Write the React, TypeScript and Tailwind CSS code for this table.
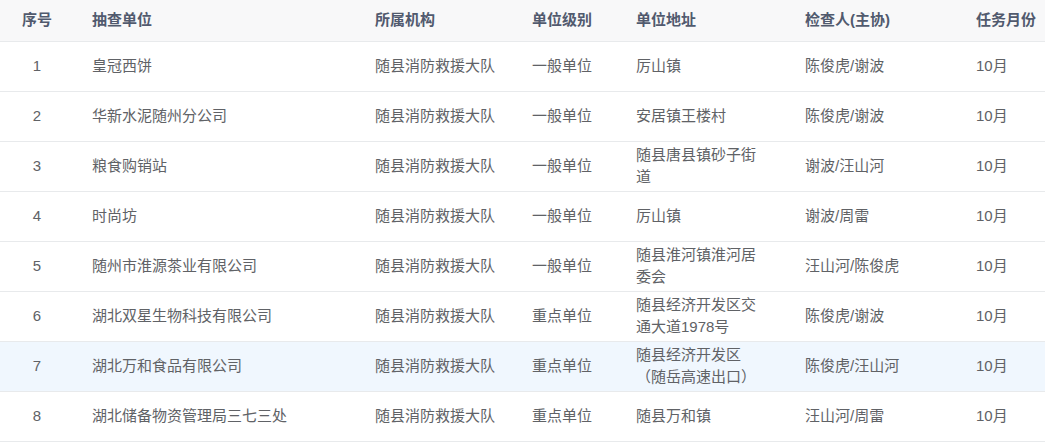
import React from 'react';

interface Row {
  no: number;
  unit: string;
  org: string;
  level: string;
  addr: string;
  checker: string;
  month: string;
}

const rows: Row[] = [
  { no: 1, unit: '皇冠西饼', org: '随县消防救援大队', level: '一般单位', addr: '厉山镇', checker: '陈俊虎/谢波', month: '10月' },
  { no: 2, unit: '华新水泥随州分公司', org: '随县消防救援大队', level: '一般单位', addr: '安居镇王楼村', checker: '陈俊虎/谢波', month: '10月' },
  { no: 3, unit: '粮食购销站', org: '随县消防救援大队', level: '一般单位', addr: '随县唐县镇砂子街道', checker: '谢波/汪山河', month: '10月' },
  { no: 4, unit: '时尚坊', org: '随县消防救援大队', level: '一般单位', addr: '厉山镇', checker: '谢波/周雷', month: '10月' },
  { no: 5, unit: '随州市淮源茶业有限公司', org: '随县消防救援大队', level: '一般单位', addr: '随县淮河镇淮河居委会', checker: '汪山河/陈俊虎', month: '10月' },
  { no: 6, unit: '湖北双星生物科技有限公司', org: '随县消防救援大队', level: '重点单位', addr: '随县经济开发区交通大道1978号', checker: '陈俊虎/谢波', month: '10月' },
  { no: 7, unit: '湖北万和食品有限公司', org: '随县消防救援大队', level: '重点单位', addr: '随县经济开发区（随岳高速出口）', checker: '陈俊虎/汪山河', month: '10月' },
  { no: 8, unit: '湖北储备物资管理局三七三处', org: '随县消防救援大队', level: '重点单位', addr: '随县万和镇', checker: '汪山河/周雷', month: '10月' },
];

const headers = ['抽查单位', '所属机构', '单位级别', '单位地址', '检查人(主协)', '任务月份'];

export default function App() {
  return (
    <div
      className="w-[1045px] h-[444px] bg-white overflow-hidden"
      style={{ fontFamily: '"Liberation Sans", "Noto Sans CJK SC", sans-serif' }}
    >
      <table className="w-full table-fixed border-collapse text-[15px] leading-[22px]">
        <colgroup>
          <col className="w-[74px]" />
          <col className="w-[283px]" />
          <col className="w-[157px]" />
          <col className="w-[104px]" />
          <col className="w-[169px]" />
          <col className="w-[171px]" />
          <col />
        </colgroup>
        <thead>
          <tr className="h-[41px] bg-[#f8f8f9] border-b border-[#e8eaec] text-[#515a6e] font-bold">
            <th className="text-center px-[18px] font-bold">序号</th>
            {headers.map((h) => (
              <th key={h} className="text-left px-[18px] font-bold whitespace-nowrap">
                {h}
              </th>
            ))}
          </tr>
        </thead>
        <tbody className="text-[#606266]">
          {rows.map((r) => (
            <tr
              key={r.no}
              className={`h-[50px] border-b border-[#e8eaec] ${r.no === 7 ? 'bg-[#f0f7fe]' : 'bg-white'}`}
            >
              <td className="text-center px-[18px]">{r.no}</td>
              <td className="px-[18px]">{r.unit}</td>
              <td className="px-[18px]">{r.org}</td>
              <td className="px-[18px]">{r.level}</td>
              <td className="px-[18px]">{r.addr}</td>
              <td className="px-[18px]">{r.checker}</td>
              <td className="px-[18px]">{r.month}</td>
            </tr>
          ))}
        </tbody>
      </table>
    </div>
  );
}
